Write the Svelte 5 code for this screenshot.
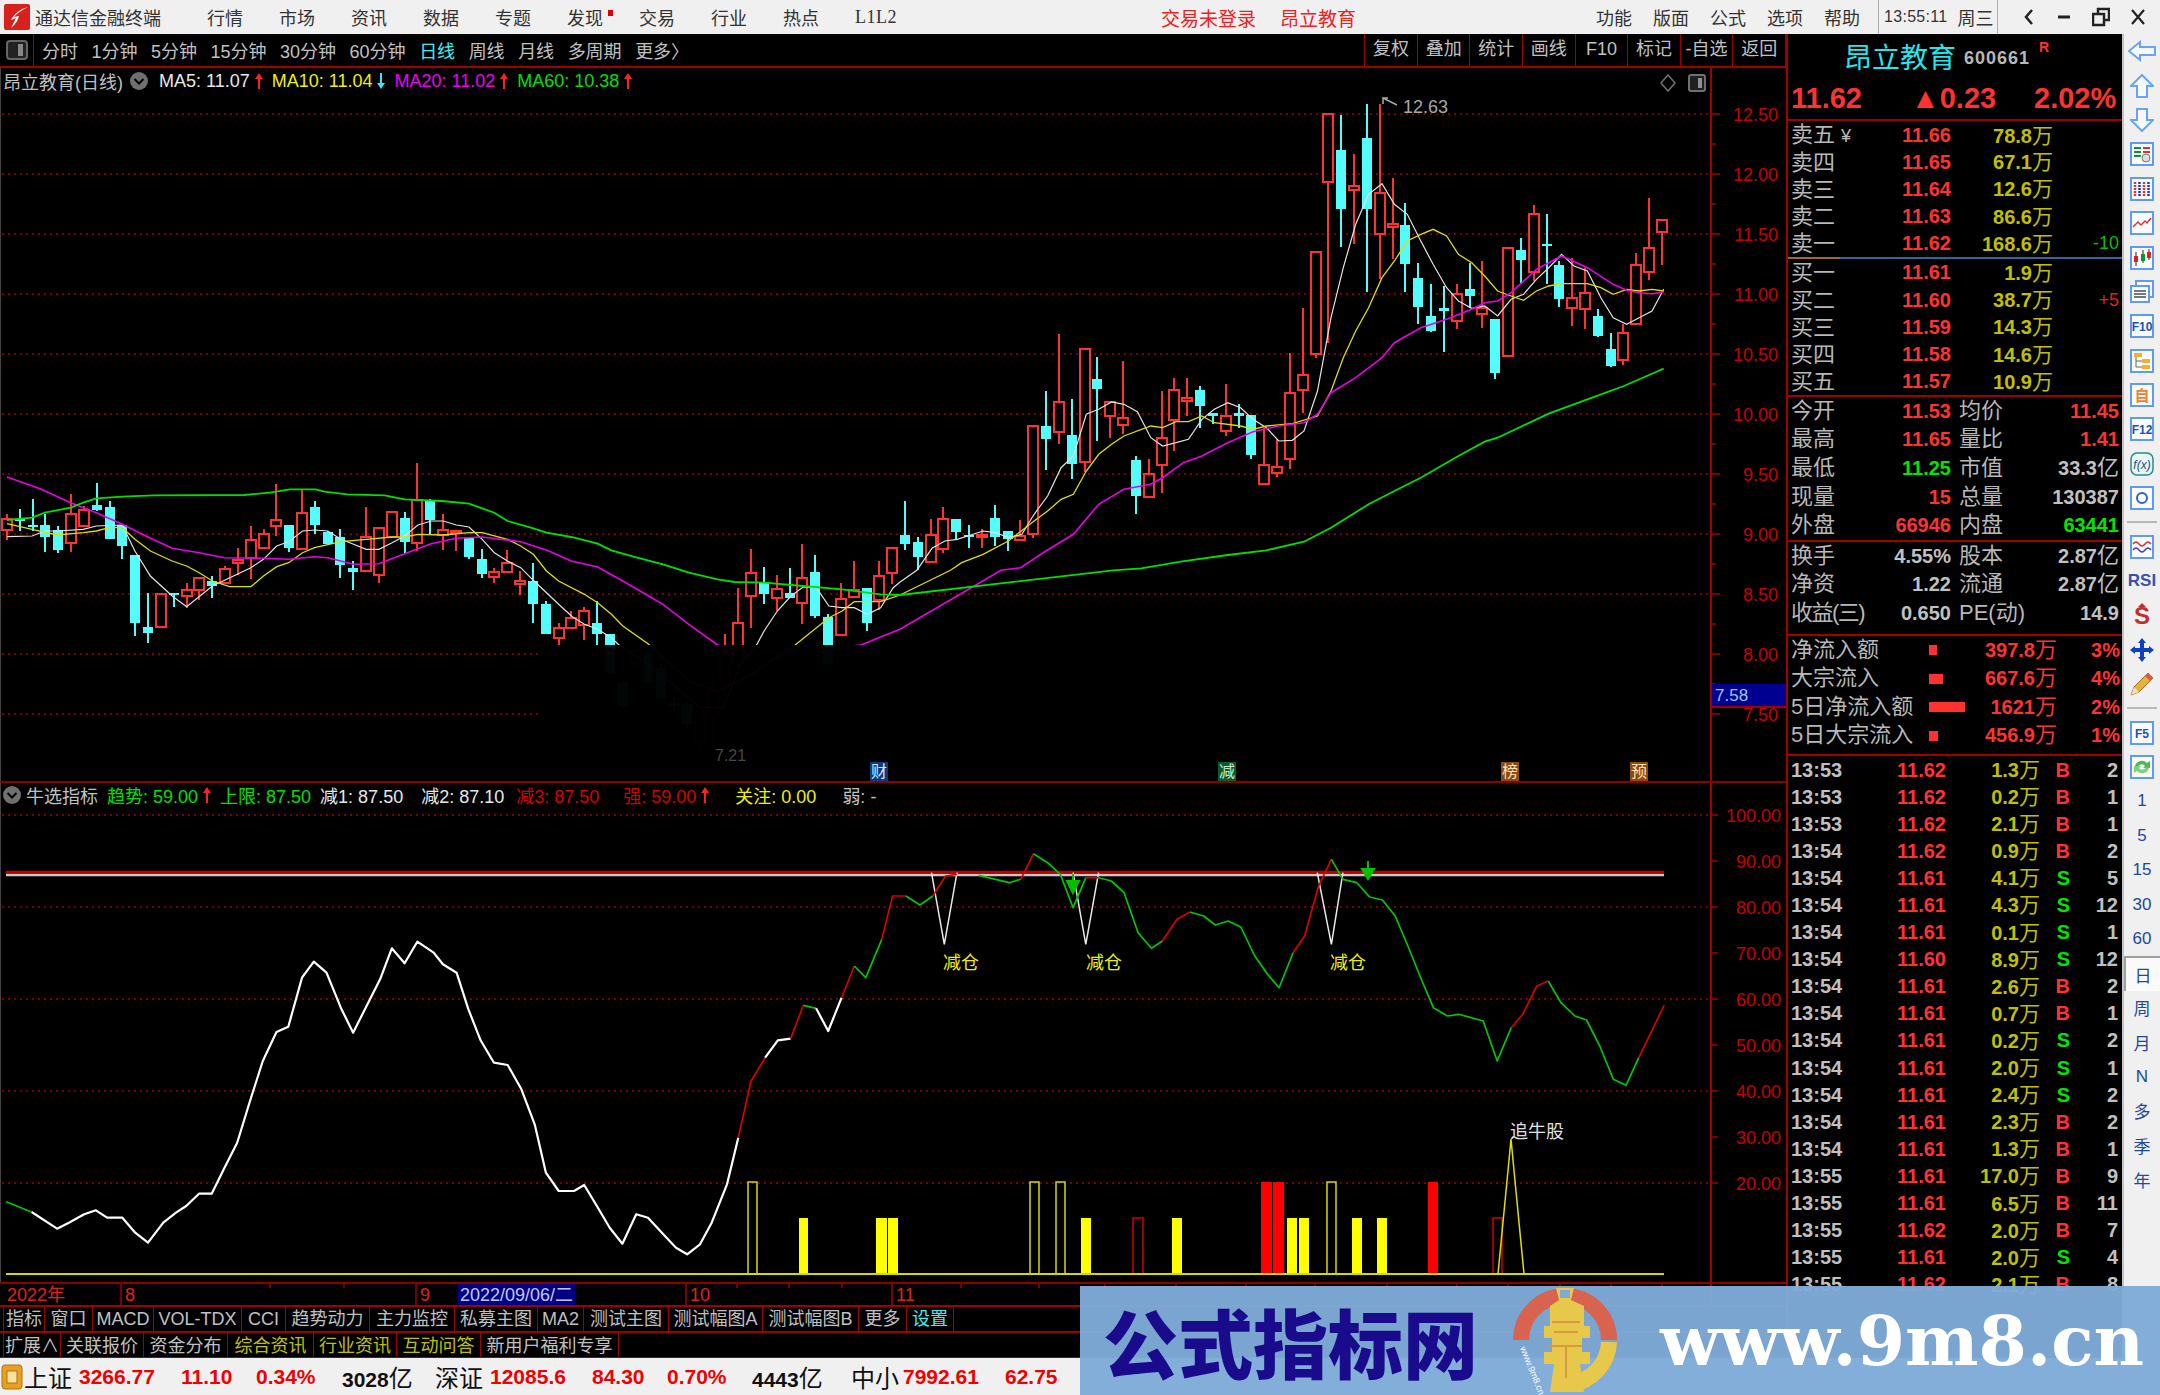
<script>
  // helpers: chart data was read off at a fixed scale, map it back to page pixels
  const x8 = (v) => v / 1.742;
  const y8 = (v) => 450 + v / 3;
  const x9 = (v) => 900 + v / 1.782;
  const y9 = (v) => 90 + v / 3;
  const x10 = (v) => 700 + v / 1.568;
  const x11 = (v) => v / 1.96;
  const y10 = (v) => 830 + v / 3;

  const pts = (s, fx, fy) =>
    s.trim().split(/\s+/).map((p) => {
      const [a, b] = p.split(',').map(Number);
      return `${fx(a).toFixed(1)},${fy(b).toFixed(1)}`;
    }).join(' ');

  // [red?, bodyTop, bodyBottom, high, low]
  const raw8 = [
    [1,205,237,190,268],[0,203,207,175,240],[0,222,225,145,240],[0,222,257,190,302],[0,237,297,225,307],
    [1,190,275,130,302],[1,178,225,165,225],[0,162,177,95,180],[0,167,265,150,265],[0,222,285,222,325],
    [0,312,515,312,555],[0,527,545,425,577],[1,430,527,430,527],[0,425,428,425,468],[1,417,435,395,470],
    [1,380,418,380,448],[0,390,405,375,440],[1,353,395,345,395],[1,327,337,290,372],[1,267,320,225,385],
    [1,250,292,235,292],[1,208,225,100,255],[0,222,292,222,302],[1,187,295,115,297],[0,168,222,150,250],
    [0,242,280,240,280],[0,258,342,235,382],[0,352,363,330,418],[1,258,360,168,360],[1,232,372,232,395],
    [1,182,257,182,260],[0,200,272,182,305],[1,148,275,37,300],[0,150,208,145,250],[1,237,252,190,297],
    [1,240,243,240,300],[0,262,317,262,325],[0,325,370,293,380],[1,362,377,350,395],[1,335,363,298,365],
    [1,390,400,360,432],[0,390,458,335,515],[0,460,550,450,550],[1,530,562,515,582],[1,502,530,480,530],
    [1,480,522,468,568],[0,515,550,450,582],[0,550,665,550,670],[0,695,765,690,770],[1,600,640,585,650],
    [0,610,690,600,700],[0,650,745,640,750],[0,755,765,740,780],[0,760,820,750,830],[1,780,870,770,895],
    [1,720,800,680,895],[1,600,700,550,740],[1,515,640,410,650],[1,367,435,293,530],[0,393,428,347,460],
    [1,415,440,372,480],[0,425,442,352,442],[1,380,455,280,520],[0,362,495,312,500],[0,497,640,490,650],
    [1,443,553,395,553],[1,418,437,330,437],[0,410,517,410,540],[1,375,448,330,478],[1,290,365,290,400]
  ];
  const raw9 = [
    [0,1332,1358,1230,1378],[0,1352,1398,1338,1438],[1,1333,1412,1285,1415],[1,1285,1375,1248,1385],[0,1285,1322,1285,1345],
    [0,1331,1334,1303,1372],[1,1333,1338,1315,1370],[0,1280,1338,1243,1365],[0,1320,1345,1320,1380],[1,1335,1348,1288,1350],
    [1,1005,1330,1005,1340],[0,1005,1043,900,1138],[1,933,1023,730,1060],[0,1032,1120,923,1165],[1,775,1113,775,1143],
    [0,865,895,798,1050],[1,933,975,933,1040],[1,980,1002,810,1030],[0,1108,1215,1095,1268],[1,1150,1218,1105,1218],
    [1,1042,1123,900,1205],[1,898,988,860,1080],[1,920,930,860,975],[0,897,945,885,1010],[0,965,975,965,1000],
    [1,975,1020,878,1035],[0,965,975,940,1010],[0,973,1092,973,1103],[1,1123,1178,1010,1178],[1,1128,1145,1045,1157],
    [1,907,1105,785,1135],[1,852,898,650,965],[1,483,790,483,800],[1,70,272,70,755],[0,177,355,72,468],
    [1,285,296,190,460],[0,140,355,40,603],[1,305,430,40,565],[1,398,408,262,505],[0,402,520,335,603],
    [0,560,648,515,700],[0,676,720,578,722],[0,650,660,585,783],[1,610,690,580,715],[0,595,615,515,652],
    [1,650,668,510,710],[0,685,845,685,863],[1,470,795,470,795],[0,478,507,440,580],[1,370,542,343,570],
    [0,460,463,370,578],[0,523,625,510,648],[1,620,650,500,705],[1,605,655,530,715],[0,676,735,655,738],
    [0,775,825,725,828],[1,727,808,700,823],[1,523,700,487,700],[1,470,542,320,568],[1,388,422,388,522]
  ];
  const toPage = (f) => (k) => [k[0], f(k[1]), f(k[2]), f(k[3]), f(k[4])];
  const candles = [...raw8.map(toPage(y8)), ...raw9.map(toPage(y9))];

  const ma = [
    { cls: 'ma5', d: pts('12,257 56,255 78,240 100,240 145,235 168,225 213,222 235,300 262,375 300,435 325,467 370,405 437,350 459,325 482,285 503,272 527,240 548,237 571,240 594,265 616,280 638,295 660,295 683,275 705,255 728,222 751,210 772,210 795,222 817,228 840,265 861,305 884,330 907,350 929,388 952,425 973,460 997,497 1018,520 1041,535 1065,560 1080,585 1130,640 1220,770 1260,770 1290,640 1318,582 1331,540 1354,480 1378,435 1399,408 1422,410 1444,465 1467,470 1488,470 1511,490 1534,470 1556,410 1568,393', x8, y8) + ' ' + pts('30,1438 57,1372 80,1350 102,1345 126,1332 148,1320 171,1325 193,1340 217,1330 239,1270 263,1215 287,1130 309,1095 332,970 354,955 377,933 399,940 423,962 447,1040 468,1065 492,1055 514,1045 538,985 560,955 584,935 607,950 629,985 653,1010 675,1050 699,1048 720,1020 744,900 768,680 790,530 812,400 835,310 859,278 881,340 904,370 928,450 950,520 974,590 995,630 1019,652 1042,645 1065,675 1089,625 1111,610 1134,565 1156,530 1179,490 1201,525 1225,540 1249,620 1271,680 1295,700 1317,680 1340,660 1361,595', x9, y9) },
    { cls: 'ma10', d: pts('12,218 56,235 100,252 145,245 168,240 190,230 213,230 235,265 262,300 300,330 325,345 347,365 370,390 400,407 437,407 459,375 482,347 503,335 527,305 548,290 594,272 638,265 683,258 705,258 728,250 772,252 817,245 840,245 884,265 907,285 929,310 952,360 973,390 1018,430 1041,455 1065,490 1085,525 1130,580 1200,690 1250,720 1300,680 1385,582 1444,500 1467,480 1488,452 1534,452 1568,432', x8, y8) + ' ' + pts('90,1438 110,1415 148,1390 193,1350 239,1290 263,1260 287,1225 309,1210 332,1140 354,1090 377,1060 399,1035 447,1005 468,1010 492,992 514,992 538,975 560,995 607,1005 629,1015 653,1005 699,998 744,975 768,900 790,800 812,720 835,650 859,560 881,510 904,450 928,430 950,415 974,435 995,490 1019,515 1042,555 1065,600 1089,615 1111,628 1134,600 1156,585 1179,578 1225,578 1249,590 1271,610 1295,595 1317,600 1340,595 1361,600', x9, y9) },
    { cls: 'ma20', d: pts('12,78 70,113 123,155 168,185 213,220 262,262 300,292 347,305 391,320 459,322 503,325 548,317 571,320 616,340 660,338 705,308 751,278 795,262 840,258 907,272 952,297 995,330 1041,348 1085,390 1130,435 1155,460 1200,520 1250,582 1290,605 1400,600 1500,582 1534,558 1568,535', x8, y8) + ' ' + pts('180,1438 215,1430 260,1380 309,1330 354,1240 399,1195 447,1180 468,1160 505,1115 538,1095 584,1055 629,1022 675,1005 720,995 744,970 768,905 812,860 859,800 881,755 928,710 974,685 1019,655 1042,635 1065,630 1089,605 1134,535 1179,495 1225,530 1271,580 1295,598 1317,605 1340,608 1361,603', x9, y9) },
    { cls: 'ma60', d: pts('12,207 56,200 78,185 123,170 145,155 168,142 213,137 268,133 425,132 470,125 505,115 550,115 565,122 605,130 670,133 705,145 770,150 817,158 861,185 884,210 929,232 952,245 995,258 1041,278 1065,298 1110,320 1155,340 1200,365 1250,385 1280,393 1331,395 1399,405 1467,415 1534,430 1568,432', x8, y8) + ' ' + pts('380,1438 430,1432 500,1412 584,1392 653,1378 720,1352 768,1310 835,1240 881,1200 928,1160 995,1095 1042,1052 1065,1040 1156,968 1225,925 1290,885 1340,848 1361,833', x9, y9) }
  ];

  const priceY = (p) => 113 + (12.5 - p) * 120;
  const gridPrices = [12.5, 12, 11.5, 11, 10.5, 10, 9.5, 9, 8.5];
  const axisPrices = [12.5, 12, 11.5, 11, 10.5, 10, 9.5, 9, 8.5, 8, 7.5];
  const quarterTicks = [12.25, 11.75, 11.25, 10.75, 10.25, 9.75, 9.25, 8.75, 8.25, 7.75];

  const valY = (v) => 1274 - v * 4.6;
  const indLabels = [100, 90, 80, 70, 60, 50, 40, 30, 20];
  const indGrid = [100, 80, 60, 40, 20];

  // trend line of the indicator, split up by colour
  const segs = [
    ['g', pts('12,1112 62,1143', x11, y10)],
    ['w', pts('62,1143 112,1193 135,1175 165,1150 188,1138 210,1160 240,1160 265,1205 290,1235 320,1175 345,1145 365,1125 390,1088 415,1088 440,1010 465,935 490,810 515,690 542,603 565,587 592,440 615,392 640,425 668,530 692,605 745,445 768,352 793,397 818,332 850,365 868,400 895,425 918,535 942,628 968,695 995,702 1022,775 1048,880 1070,1025 1095,1080 1125,1080 1145,1062 1170,1125 1195,1190 1220,1238 1247,1150 1270,1160 1300,1210 1325,1250 1347,1270 1372,1240 1395,1175 1425,1060 1447,920', x11, y10)],
    ['r', pts('60,920 80,750 102,680', x10, y10)],
    ['w', pts('102,680 122,628 142,623', x10, y10)],
    ['r', pts('142,623 162,523', x10, y10)],
    ['g', pts('162,523 182,532', x10, y10)],
    ['w', pts('182,532 201,600 222,500', x10, y10)],
    ['r', pts('222,500 242,405', x10, y10)],
    ['g', pts('242,405 260,440 285,325', x10, y10)],
    ['r', pts('285,325 302,195 323,195', x10, y10)],
    ['g', pts('323,195 345,222 365,195', x10, y10)],
    ['r', pts('365,195 385,135 403,130', x10, y10)],
    ['g', pts('437,133 485,155 503,145', x10, y10)],
    ['r', pts('503,145 523,68', x10, y10)],
    ['g', pts('523,68 545,95 565,130 585,230 605,140', x10, y10)],
    ['r', pts('605,140 625,140', x10, y10)],
    ['g', pts('625,140 645,150 665,185 687,305 708,352 725,330', x10, y10)],
    ['r', pts('725,330 748,265 768,243', x10, y10)],
    ['g', pts('768,243 790,255 808,282 828,270 848,288 870,375 890,430 908,470 930,365', x10, y10)],
    ['r', pts('930,365 948,315 970,165 990,85', x10, y10)],
    ['g', pts('990,85 1008,145 1030,155 1050,198 1070,207 1090,255 1110,345 1130,440 1150,530 1172,555 1190,550 1228,570 1250,690 1272,590', x10, y10)],
    ['r', pts('1272,590 1290,550 1312,465 1330,450', x10, y10)],
    ['g', pts('1330,450 1350,515 1372,555 1390,567 1412,650 1432,745 1452,763 1472,680', x10, y10)],
    ['r', pts('1472,680 1512,522', x10, y10)]
  ];
  const dips = [
    pts('363,125 383,340 403,125', x10, y10),
    pts('585,125 605,340 625,125', x10, y10),
    pts('968,125 990,340 1008,125', x10, y10)
  ];

  // [left, right, tall?, kind] kind: y yellow solid, h hollow yellow, r red solid, o hollow red
  const bars = [
    [748, 757, 1, 'h'], [799, 808, 0, 'y'], [876, 887, 0, 'y'], [888, 898, 0, 'y'],
    [1030, 1039, 1, 'h'], [1056, 1065, 1, 'h'], [1081, 1091, 0, 'y'], [1133, 1143, 0, 'o'],
    [1172, 1182, 0, 'y'], [1261, 1272, 1, 'r'], [1273, 1284, 1, 'r'], [1287, 1297, 0, 'y'],
    [1299, 1309, 0, 'y'], [1327, 1336, 1, 'h'], [1352, 1362, 0, 'y'], [1377, 1387, 0, 'y'],
    [1428, 1438, 1, 'r'], [1493, 1502, 0, 'o']
  ];

  const menu = ['行情', '市场', '资讯', '数据', '专题', '发现', '交易', '行业', '热点'];
  const periods = ['分时', '1分钟', '5分钟', '15分钟', '30分钟', '60分钟', '日线', '周线', '月线', '多周期', '更多〉'];
  const chartBtns = ['复权', '叠加', '统计', '画线', 'F10', '标记', '-自选', '返回'];

  const asks = [
    ['卖五', '11.66', '78.8', '', ''], ['卖四', '11.65', '67.1', '', ''], ['卖三', '11.64', '12.6', '', ''],
    ['卖二', '11.63', '86.6', '', ''], ['卖一', '11.62', '168.6', '-10', 'green']
  ];
  const bids = [
    ['买一', '11.61', '1.9', '', ''], ['买二', '11.60', '38.7', '+5', 'red'], ['买三', '11.59', '14.3', '', ''],
    ['买四', '11.58', '14.6', '', ''], ['买五', '11.57', '10.9', '', '']
  ];
  const quotes = [
    ['今开', '11.53', 'red', '均价', '11.45', 'red'],
    ['最高', '11.65', 'red', '量比', '1.41', 'red'],
    ['最低', '11.25', 'green', '市值', '33.3亿', 'gray'],
    ['现量', '15', 'red', '总量', '130387', 'gray'],
    ['外盘', '66946', 'red', '内盘', '63441', 'green']
  ];
  const quotes2 = [
    ['换手', '4.55%', 'gray', '股本', '2.87亿', 'gray'],
    ['净资', '1.22', 'gray', '流通', '2.87亿', 'gray'],
    ['收益(三)', '0.650', 'gray', 'PE(动)', '14.9', 'gray']
  ];
  const flows = [
    ['净流入额', 8, '397.8万', '3%'],
    ['大宗流入', 14, '667.6万', '4%'],
    ['5日净流入额', 36, '1621万', '2%'],
    ['5日大宗流入', 9, '456.9万', '1%']
  ];
  const trades = [
    ['13:53', '11.62', '1.3', 'B', 2], ['13:53', '11.62', '0.2', 'B', 1], ['13:53', '11.62', '2.1', 'B', 1],
    ['13:54', '11.62', '0.9', 'B', 2], ['13:54', '11.61', '4.1', 'S', 5], ['13:54', '11.61', '4.3', 'S', 12],
    ['13:54', '11.61', '0.1', 'S', 1], ['13:54', '11.60', '8.9', 'S', 12], ['13:54', '11.61', '2.6', 'B', 2],
    ['13:54', '11.61', '0.7', 'B', 1], ['13:54', '11.61', '0.2', 'S', 2], ['13:54', '11.61', '2.0', 'S', 1],
    ['13:54', '11.61', '2.4', 'S', 2], ['13:54', '11.61', '2.3', 'B', 2], ['13:54', '11.61', '1.3', 'B', 1],
    ['13:55', '11.61', '17.0', 'B', 9], ['13:55', '11.61', '6.5', 'B', 11], ['13:55', '11.62', '2.0', 'B', 7],
    ['13:55', '11.61', '2.0', 'S', 4], ['13:55', '11.62', '2.1', 'B', 8]
  ];

  const tabs1 = [['指标'], ['窗口'], ['MACD'], ['VOL-TDX'], ['CCI'], ['趋势动力'], ['主力监控'], ['私募主图'], ['MA2'], ['测试主图'], ['测试幅图A'], ['测试幅图B'], ['更多'], ['设置', 'cyan']];
  const tabs2 = [['扩展∧'], ['关联报价'], ['资金分布'], ['综合资讯', 'olive'], ['行业资讯', 'olive'], ['互动问答', 'olive'], ['新用户福利专享']];
  const dateTicks = [270, 344, 737, 789, 842, 961, 1039, 1105, 1176, 1246, 1315, 1387, 1457, 1508, 1560, 1611, 1662];
  const periodsSide = ['1', '5', '15', '30', '60'];
  const periodsSide2 = ['周', '月', 'N', '多', '季', '年'];
</script>

{#snippet arrowUp()}
  <svg class="arr" width="8" height="16" viewBox="0 0 8 16"><path d="M4 0 L8 6 H5 V16 H3 V6 H0 Z" fill="#ff2020" /></svg>
{/snippet}
{#snippet arrowDown()}
  <svg class="arr" width="8" height="16" viewBox="0 0 8 16"><path d="M4 16 L8 10 H5 V0 H3 V10 H0 Z" fill="#40e0ff" /></svg>
{/snippet}
{#snippet chevron()}
  <svg width="18" height="18" viewBox="0 0 18 18"><circle cx="9" cy="9" r="9" fill="#707070" /><path d="M4.5 7 L9 11.5 L13.5 7" fill="none" stroke="#000" stroke-width="2" /></svg>
{/snippet}

<div class="app">
  <header class="top">
    <div class="top-left">
      <svg class="logo" width="26" height="26" viewBox="0 0 26 26">
        <rect width="26" height="26" rx="2" fill="#d8201c" />
        <path d="M24 3 C16 5 10 10 7 16 L12 14 L7 24 C12 20 14 16 15 12 L10 13 C13 9 18 6 24 3 Z" fill="#fff" />
      </svg>
      <span class="brand">通达信金融终端</span>
      <nav class="menu">
        {#each menu as m}
          <span class="menu-item">{m}{#if m === '发现'}<i class="dot"></i>{/if}</span>
        {/each}
        <span class="menu-item l2">L1L2</span>
      </nav>
    </div>
    <div class="top-center"><span>交易未登录</span><span>昂立教育</span></div>
    <div class="top-right">
      <span>功能</span><span>版面</span><span>公式</span><span>选项</span><span>帮助</span>
      <div class="clock"><span class="time">13:55:11</span><span>周三</span></div>
      <div class="win">
        <svg width="14" height="20" viewBox="0 0 14 20"><path d="M10 3 L4 10 L10 17" fill="none" stroke="#222" stroke-width="2.5" /></svg>
        <svg width="14" height="20" viewBox="0 0 14 20"><path d="M1 10 H13" stroke="#222" stroke-width="3" /></svg>
        <svg width="18" height="20" viewBox="0 0 18 20"><path d="M1 7 H12 V18 H1 Z M6 7 V2 H17 V13 H12" fill="none" stroke="#222" stroke-width="2.5" /></svg>
        <svg width="14" height="20" viewBox="0 0 14 20"><path d="M1 3 L13 17 M13 3 L1 17" stroke="#222" stroke-width="2.2" /></svg>
      </div>
    </div>
  </header>

  <div class="middle">
    <section class="left">
      <div class="toolbar">
        <div class="tb-icon"><svg width="22" height="20" viewBox="0 0 22 20"><rect x="1" y="1" width="20" height="18" rx="3" fill="#222" stroke="#666" stroke-width="2" /><rect x="12" y="4" width="5" height="12" fill="#888" /></svg></div>
        <div class="periods">
          {#each periods as p}
            <span class:active={p === '日线'}>{p}</span>
          {/each}
        </div>
        <div class="btns">
          {#each chartBtns as b}
            <span>{b}</span>
          {/each}
        </div>
      </div>

      <div class="chart main-chart">
        <svg width="1786" height="713" viewBox="0 67 1786 713">
          <line class="edge" x1="0.5" x2="0.5" y1="67" y2="780" />
          {#each gridPrices as p}
            <line class="dots" x1="2" x2="1711" y1={priceY(p)} y2={priceY(p)} />
          {/each}
          <line class="dots" x1="2" x2="540" y1={priceY(8)} y2={priceY(8)} />
          <line class="dots" x1="2" x2="540" y1={priceY(7.5)} y2={priceY(7.5)} />

          {#each candles as k, i}
            {@const cx = Math.round(6.9 + 12.83 * i)}
            <line class={k[0] ? 'wick-r' : 'wick-c'} x1={cx} x2={cx} y1={k[3]} y2={k[4]} />
            <rect class={k[0] ? 'body-r' : 'body-c'} x={cx - 5} width="10" y={k[1]} height={Math.max(k[2] - k[1], 2)} />
          {/each}
          {#each ma as l}
            <polyline class={l.cls} points={l.d} />
          {/each}

          <!-- the bottom of the chart is blanked out in the screenshot -->
          <rect class="blank" x="540" y="644" width="1171" height="110" />
          <text class="faint" x="715" y="760">7.21</text>
          <path d="M1383 103 V97 L1397 104 M1383 97 L1388 97" fill="none" stroke="#a8a8a8" stroke-width="1.5" />
          <text class="high" x="1403" y="112">12.63</text>

          <rect x="870" y="761" width="18" height="19" fill="#0a3a80" />
          <text class="mark" x="879" y="776" fill="#d8e8ff">财</text>
          <rect x="1218" y="761" width="18" height="19" fill="#0c5a30" />
          <text class="mark" x="1227" y="776" fill="#c8f0c8">减</text>
          <rect x="1501" y="761" width="18" height="19" fill="#8a4a14" />
          <text class="mark" x="1510" y="776" fill="#ffe0b0">榜</text>
          <rect x="1630" y="761" width="18" height="19" fill="#8a4a14" />
          <text class="mark" x="1639" y="776" fill="#ffe0b0">预</text>

          <line class="axis" x1="1711" x2="1711" y1="67" y2="780" />
          {#each quarterTicks as p}
            <line class="axis-thin" x1="1711" x2="1716" y1={priceY(p)} y2={priceY(p)} />
          {/each}
          {#each axisPrices as p}
            <line class="axis-thin" x1="1711" x2="1720" y1={priceY(p)} y2={priceY(p)} />
            <text class="ax" x="1778" y={priceY(p) + 7}>{p.toFixed(2)}</text>
          {/each}
          <rect x="1712" y="683" width="74" height="22" fill="#000090" />
          <text class="cur" x="1715" y="700">7.58</text>
          <line class="axis" x1="1711" x2="1786" y1="706" y2="706" />

          <path d="M1668 74 L1675 82 L1668 90 L1661 82 Z" fill="none" stroke="#707070" stroke-width="1.5" />
          <rect x="1689" y="74" width="16" height="16" rx="2" fill="#202020" stroke="#707070" stroke-width="2" />
          <rect x="1698" y="77" width="4" height="10" fill="#909090" />
        </svg>
        <div class="legend">
          <span class="gray">昂立教育(日线)</span>
          <span class="chev">{@render chevron()}</span>
          <span class="white first-lg">MA5: 11.07</span>{@render arrowUp()}
          <span class="yellow lg">MA10: 11.04</span>{@render arrowDown()}
          <span class="magenta lg">MA20: 11.02</span>{@render arrowUp()}
          <span class="lime lg">MA60: 10.38</span>{@render arrowUp()}
        </div>
      </div>

      <div class="chart ind-chart">
        <svg width="1786" height="499" viewBox="0 782 1786 499">
          <line class="edge" x1="0.5" x2="0.5" y1="782" y2="1281" />
          {#each indGrid as v}
            <line class="dots" x1="2" x2="1711" y1={valY(v)} y2={valY(v)} />
          {/each}
          <line class="limit-red" x1="6" x2="1664" y1="871" y2="871" />
          <line class="limit-gray" x1="6" x2="1664" y1="874" y2="874" />

          {#each bars as b}
            {@const top = b[2] ? 1181 : 1217}
            {#if b[3] === 'y' || b[3] === 'r'}
              <rect x={b[0]} y={top} width={b[1] - b[0]} height={1273 - top} fill={b[3] === 'y' ? '#ffff00' : '#ff0000'} />
            {:else}
              <rect x={b[0]} y={top} width={b[1] - b[0]} height={1273 - top} fill="none" stroke={b[3] === 'h' ? '#d8d800' : '#d00000'} stroke-width="1.5" />
            {/if}
          {/each}
          <line class="base" x1="6" x2="1664" y1="1273" y2="1273" />
          <polyline class="spike" points="1498,1273 1507,1180 1511,1138 1515,1180 1524,1273" />
          <text class="chase" x="1510" y="1137">追牛股</text>

          {#each dips as d}
            <polyline class="dip" points={d} />
          {/each}
          {#each segs as s}
            <polyline class={'seg-' + s[0]} points={s[1]} />
          {/each}
          <path d="M1073 873 V884 M1067 880 H1079 L1073 892 Z" fill="#00c000" stroke="#00c000" stroke-width="2" />
          <path d="M1368 860 V870 M1362 868 H1374 L1368 878 Z" fill="#00c000" stroke="#00c000" stroke-width="2" />

          <text class="warn" x="943" y="968">减仓</text>
          <text class="warn" x="1086" y="968">减仓</text>
          <text class="warn" x="1330" y="968">减仓</text>

          <line class="axis" x1="1711" x2="1711" y1="782" y2="1281" />
          {#each indLabels as v}
            <line class="axis-thin" x1="1711" x2="1718" y1={valY(v)} y2={valY(v)} />
            <text class="ax" x="1781" y={valY(v) + 7}>{v.toFixed(2)}</text>
          {/each}
        </svg>
        <div class="legend ind">
          <span class="chev first">{@render chevron()}</span>
          <span class="gray">牛选指标</span>
          <span class="lime lg">趋势: 59.00</span>{@render arrowUp()}
          <span class="lime lg">上限: 87.50</span>
          <span class="white lg">减1: 87.50</span>
          <span class="white wide">减2: 87.10</span>
          <span class="dred narrow">减3: 87.50</span>
          <span class="dred wider">强: 59.00</span>{@render arrowUp()}
          <span class="yellow widest">关注: 0.00</span>
          <span class="gray widest">弱: -</span>
        </div>
      </div>

      <div class="dates">
        <svg width="1786" height="21" viewBox="0 0 1786 21">
          {#each dateTicks as t}
            <line class="axis-thin" x1={t} x2={t} y1="0" y2="4" />
          {/each}
          <line class="axis-thin" x1="121" x2="121" y1="0" y2="21" />
          <line class="axis-thin" x1="416" x2="416" y1="0" y2="21" />
          <line class="axis-thin" x1="686" x2="686" y1="0" y2="21" />
          <line class="axis-thin" x1="892" x2="892" y1="0" y2="21" />
          <text class="dt" x="7" y="17">2022年</text>
          <text class="dt" x="125" y="17">8</text>
          <text class="dt" x="420" y="17">9</text>
          <rect x="458" y="0" width="117" height="21" fill="#000080" />
          <text class="dt-sel" x="460" y="17">2022/09/06/二</text>
          <text class="dt" x="690" y="17">10</text>
          <text class="dt" x="896" y="17">11</text>
          <line class="axis" x1="1711" x2="1711" y1="0" y2="21" />
        </svg>
      </div>

      <div class="tabs row1">
        {#each tabs1 as t}
          <span class={t[1] || ''}>{t[0]}</span>
        {/each}
      </div>
      <div class="tabs row2">
        {#each tabs2 as t}
          <span class={t[1] || ''}>{t[0]}</span>
        {/each}
      </div>
    </section>

    <aside class="panel">
      <div class="name">
        <span class="cn">昂立教育</span><span class="code">600661</span><sup class="r">R</sup>
      </div>
      <div class="price"><span>11.62</span><span>▲0.23</span><span>2.02%</span></div>

      <div class="sec depth">
        {#each asks as a, i}
          <div class="d-row">
            <span class="lbl">{a[0]}{#if i === 0}<em class="yen">¥</em>{/if}</span>
            <b class="red">{a[1]}</b>
            <span class="vol"><b>{a[2]}</b>万</span>
            <span class="delta {a[4]}">{a[3]}</span>
          </div>
        {/each}
      </div>
      <div class="split"></div>
      <div class="depth">
        {#each bids as a}
          <div class="d-row">
            <span class="lbl">{a[0]}</span>
            <b class="red">{a[1]}</b>
            <span class="vol"><b>{a[2]}</b>万</span>
            <span class="delta {a[4]}">{a[3]}</span>
          </div>
        {/each}
      </div>

      <div class="sec">
        {#each quotes as q}
          <div class="q-row">
            <span class="lbl">{q[0]}</span><b class={q[2]}>{q[1]}</b>
            <span class="lbl l2nd">{q[3]}</span><b class={q[5]}>{q[4].replace('亿', '')}{#if q[4].endsWith('亿')}<i class="unit">亿</i>{/if}</b>
          </div>
        {/each}
      </div>
      <div class="sec pad">
        {#each quotes2 as q}
          <div class="q-row">
            <span class="lbl" class:tight={q[0].includes('(')}>{q[0]}</span><b class={q[2]}>{q[1]}</b>
            <span class="lbl l2nd">{q[3]}</span><b class={q[5]}>{q[4].replace('亿', '')}{#if q[4].endsWith('亿')}<i class="unit">亿</i>{/if}</b>
          </div>
        {/each}
      </div>
      <div class="sec pad2">
        {#each flows as f}
          <div class="f-row">
            <span class="lbl">{f[0]}</span>
            <span class="bar-cell"><i class="bar" style="width:{f[1]}px"></i></span>
            <b class="red">{f[2].replace('万', '')}<i class="unit">万</i></b>
            <b class="red">{f[3]}</b>
          </div>
        {/each}
      </div>
      <div class="sec">
        {#each trades as t}
          <div class="t-row">
            <b class="gray">{t[0]}</b>
            <b class="red">{t[1]}</b>
            <span class="vol"><b>{t[2]}</b>万</span>
            <b class={t[3] === 'B' ? 'red' : 'green'}>{t[3]}</b>
            <b class="gray">{t[4]}</b>
          </div>
        {/each}
      </div>
    </aside>

    <aside class="side">
      <span class="ic"><svg width="28" height="22" viewBox="0 0 28 22"><path d="M1 11 L12 2 V7 H27 V15 H12 V20 Z" class="ar" /></svg></span>
      <span class="ic"><svg width="24" height="24" viewBox="0 0 24 24"><path d="M12 1 L23 12 H17 V23 H7 V12 H1 Z" class="ar" /></svg></span>
      <span class="ic"><svg width="24" height="24" viewBox="0 0 24 24"><path d="M12 23 L23 12 H17 V1 H7 V12 H1 Z" class="ar" /></svg></span>
      <span class="ic"><svg width="24" height="24" viewBox="0 0 24 24"><rect class="bx" x="1" y="1" width="22" height="22" /><path d="M4 6 H11 M4 10 H11 M4 14 H11" stroke="#109030" stroke-width="2" /><path d="M13 6 H20 M13 10 H20" stroke="#e03030" stroke-width="2" /><circle cx="16" cy="16" r="4" fill="#ddd" stroke="#777" /></svg></span>
      <span class="ic"><svg width="24" height="24" viewBox="0 0 24 24"><rect class="bx" x="1" y="1" width="22" height="22" /><path d="M5 5 V19" stroke="#e03030" stroke-width="2.5" stroke-dasharray="2 1" /><path d="M9.5 5 V19" stroke="#2030d0" stroke-width="2.5" stroke-dasharray="2 1" /><path d="M14 5 V19" stroke="#e03030" stroke-width="2.5" stroke-dasharray="2 1" /><path d="M18.5 5 V19" stroke="#2030d0" stroke-width="2.5" stroke-dasharray="2 1" /></svg></span>
      <span class="ic"><svg width="24" height="24" viewBox="0 0 24 24"><rect class="bx" x="1" y="1" width="22" height="22" /><path d="M3 16 L8 11 L11 14 L15 10 L17 12 L21 7" fill="none" stroke="#e03030" stroke-width="1.5" /></svg></span>
      <span class="ic"><svg width="24" height="24" viewBox="0 0 24 24"><rect class="bx" x="1" y="1" width="22" height="22" /><path d="M6 6 V20 M13 4 V17 M19 3 V14" stroke="#222" /><rect x="4" y="10" width="4" height="6" fill="#e02020" /><rect x="11" y="8" width="4" height="7" fill="#109030" /><rect x="17" y="6" width="4" height="6" fill="#e02020" /></svg></span>
      <span class="ic"><svg width="24" height="24" viewBox="0 0 24 24"><rect class="bx" x="6" y="1" width="17" height="16" /><rect class="bx" x="1" y="6" width="18" height="16" /><path d="M4 11 H16 M4 14 H16 M4 17 H16" stroke="#777" stroke-width="2" /></svg></span>
      <span class="ic"><svg width="24" height="24" viewBox="0 0 24 24"><rect class="bx" x="1" y="1" width="22" height="22" /><text class="ic-t" x="12" y="16.5">F10</text></svg></span>
      <span class="ic"><svg width="24" height="24" viewBox="0 0 24 24"><rect class="bx" x="1" y="1" width="22" height="22" /><rect x="4" y="4" width="8" height="4" fill="#f0b030" /><rect x="12" y="10" width="8" height="4" fill="#f0b030" /><rect x="12" y="16" width="8" height="4" fill="#f0b030" /><path d="M6 8 V18 H12 M6 12 H12" fill="none" stroke="#666" /></svg></span>
      <span class="ic"><svg width="24" height="24" viewBox="0 0 24 24"><rect class="bx" x="1" y="1" width="22" height="22" /><text class="ic-o" x="12" y="18">自</text></svg></span>
      <span class="ic"><svg width="24" height="24" viewBox="0 0 24 24"><rect class="bx" x="1" y="1" width="22" height="22" /><text class="ic-t" x="12" y="16.5">F12</text></svg></span>
      <span class="ic"><svg width="24" height="24" viewBox="0 0 24 24"><rect x="1" y="1" width="22" height="22" rx="6" fill="#e8f8f4" stroke="#2a8a8a" stroke-width="1.5" /><text class="ic-f" x="12" y="17">f(x)</text></svg></span>
      <span class="ic"><svg width="24" height="24" viewBox="0 0 24 24"><rect class="bx" x="1" y="1" width="22" height="22" /><circle cx="12" cy="12" r="5" fill="none" stroke="#3060c0" stroke-width="2" /></svg></span>
      <hr />
      <span class="ic"><svg width="24" height="24" viewBox="0 0 24 24"><rect class="bx" x="1" y="1" width="22" height="22" /><path d="M3 9 Q6 5 9 9 T15 9 T21 9" fill="none" stroke="#e03030" stroke-width="1.5" /><path d="M3 15 Q6 11 9 15 T15 15 T21 15" fill="none" stroke="#4040d0" stroke-width="1.5" /></svg></span>
      <span class="ic rsi">RSI</span>
      <span class="ic"><svg width="24" height="26" viewBox="0 0 24 26"><text class="ic-s" x="12" y="22">S</text><path d="M12 1 L16 5 H8 Z" fill="#c03030" /></svg></span>
      <span class="ic"><svg width="26" height="26" viewBox="0 0 26 26"><path d="M13 1 L17 6 H15 V11 H20 V9 L25 13 L20 17 V15 H15 V20 H17 L13 25 L9 20 H11 V15 H6 V17 L1 13 L6 9 V11 H11 V6 H9 Z" fill="#1040c0" /></svg></span>
      <span class="ic"><svg width="26" height="26" viewBox="0 0 26 26"><path d="M2 24 L5 16 L19 2 L24 7 L10 21 Z" fill="#e8b040" stroke="#a07020" /><path d="M2 24 L5 16 L10 21 Z" fill="#f0e0c0" /><path d="M19 2 L24 7 L21 10 L16 5 Z" fill="#d86040" /></svg></span>
      <hr />
      <span class="ic"><svg width="24" height="24" viewBox="0 0 24 24"><rect class="bx" x="1" y="1" width="22" height="22" /><text class="ic-t" x="12" y="16.5">F5</text></svg></span>
      <span class="ic"><svg width="24" height="24" viewBox="0 0 24 24"><rect class="bx" x="1" y="1" width="22" height="22" /><path d="M5 11 A7 7 0 0 1 17 8 L20 6 V13 H13 L15 11 A4 4 0 0 0 8 12 Z" fill="#50b850" /><path d="M19 13 A7 7 0 0 1 7 16 L4 18 V11 H11 L9 13 A4 4 0 0 0 16 12 Z" fill="#80d080" /></svg></span>
      {#each periodsSide as p}
        <span class="ic txt">{p}</span>
      {/each}
      <span class="ic txt sel">日</span>
      {#each periodsSide2 as p}
        <span class="ic txt">{p}</span>
      {/each}
    </aside>
  </div>

  <footer class="status">
    <svg width="22" height="26" viewBox="0 0 22 26"><rect x="1" y="1" width="20" height="24" rx="3" fill="#e8a020" stroke="#b07010" /><rect x="6" y="7" width="10" height="12" fill="#f8e0a0" stroke="#b07010" /></svg>
    <span class="s-lbl">上证</span><b class="s-red">3266.77</b><b class="s-red">11.10</b><b class="s-red">0.34%</b><span class="s-vol"><b>3028</b>亿</span>
    <span class="s-lbl">深证</span><b class="s-red">12085.6</b><b class="s-red">84.30</b><b class="s-red">0.70%</b><span class="s-vol"><b>4443</b>亿</span>
    <span class="s-lbl">中小</span><b class="s-red">7992.61</b><b class="s-red">62.75</b>
  </footer>

  <!-- site stamp lying over the bottom right corner -->
  <div class="stamp">
    <span class="stamp-cn">公式指标网</span>
    <svg class="stamp-logo" width="110" height="109" viewBox="0 0 110 109">
      <path d="M11 54 A44 44 0 0 1 99 54" fill="none" stroke="#d8634f" stroke-width="16" />
      <path d="M99 56 A44 44 0 0 1 60 98" fill="none" stroke="#e8c84a" stroke-width="16" />
      <path d="M46 2 H64 L61 14 L74 20 V40 H80 V52 H72 V66 H80 V78 H70 L74 106 H40 L44 78 H34 V66 H42 V52 H34 V40 H40 V20 L49 14 Z" fill="#e8c84a" />
      <path d="M42 36 H70 M40 60 H72 M56 60 V92 M44 46 H68" stroke="#d89a40" stroke-width="2" />
      <path d="M50 4 H60 V12 H50 Z" fill="#80abd9" />
      <text class="stamp-mini" transform="translate(10 62) rotate(68)">www.9m8.cn</text>
    </svg>
    <span class="stamp-en">www.9m8.cn</span>
  </div>
</div>

<style>
  :global(body) {
    margin: 0;
    background: #000;
  }

  .app {
    position: relative;
    width: 2160px;
    height: 1395px;
    display: flex;
    flex-direction: column;
    overflow: hidden;
    background: #000;
    color: #c0c0c0;
    font-family: "Liberation Sans", "Noto Sans CJK SC", sans-serif;
    font-size: 18px;
  }

  .top {
    height: 34px;
    flex: none;
    background: #f0f0f0;
    color: #333;
    display: grid;
    grid-template-columns: 1161px 435px 1fr;
    align-items: center;
    white-space: nowrap;
  }

  .top-left,
  .top-center,
  .top-right,
  .menu,
  .clock,
  .win {
    display: flex;
    align-items: center;
  }

  .logo {
    margin-left: 4px;
  }

  .brand {
    margin-left: 5px;
  }

  .menu {
    margin-left: 46px;
    gap: 36px;
  }

  .menu-item {
    position: relative;
  }

  .dot {
    position: absolute;
    right: -10px;
    top: 6px;
    width: 5px;
    height: 6px;
    background: #e00000;
  }

  .l2 {
    font-family: "Liberation Serif", serif;
    letter-spacing: 0.5px;
  }

  .top-center {
    gap: 24px;
    font-size: 19px;
    color: #f02020;
  }

  .top-right {
    gap: 21px;
  }

  .clock {
    gap: 10px;
    height: 34px;
    margin-left: -3px;
    padding: 0 3px 0 5px;
    border-left: 1px solid #b0b0b0;
    border-right: 1px solid #b0b0b0;
  }

  .time {
    font-size: 16px;
    letter-spacing: 0.3px;
  }

  .win {
    gap: 21px;
    margin-left: 3px;
  }

  .middle {
    flex: 1;
    display: flex;
    min-height: 0;
  }

  .left {
    width: 1786px;
    flex: none;
  }

  .toolbar {
    height: 32px;
    display: flex;
    align-items: center;
    border-bottom: 2px solid #a00000;
    box-sizing: content-box;
  }

  .tb-icon {
    width: 34px;
    height: 32px;
    display: flex;
    align-items: center;
    justify-content: center;
    border-right: 1px solid #a00000;
    box-sizing: border-box;
  }

  .periods {
    display: flex;
    gap: 13.5px;
    margin-left: 8px;
  }

  .active {
    color: #40f0f0;
  }

  .btns {
    display: grid;
    grid-template-columns: repeat(8, 52.6px);
    margin-left: auto;
    height: 32px;
    border-right: 1px solid #a00000;
  }

  .btns span {
    border-left: 1px solid #a00000;
    text-align: center;
    line-height: 31px;
  }

  .chart {
    position: relative;
  }

  .chart svg {
    display: block;
  }

  .main-chart {
    height: 713px;
    border-bottom: 2px solid #8b0000;
  }

  .ind-chart {
    height: 499px;
    border-bottom: 2px solid #8b0000;
  }

  .legend {
    position: absolute;
    left: 3px;
    top: 1px;
    height: 24px;
    display: flex;
    align-items: center;
    white-space: nowrap;
  }

  .legend.ind {
    top: 0;
  }

  .chev {
    display: flex;
    margin: 0 6px 0 7px;
  }

  .chev.first {
    margin: 0 5px 0 0;
  }

  .first-lg {
    margin-left: 5px;
  }

  .lg {
    margin-left: 9px;
  }

  .legend .arr {
    margin-left: 5px;
  }

  .narrow {
    margin-left: 12px;
  }

  .wide {
    margin-left: 18px;
  }

  .wider {
    margin-left: 24px;
  }

  .widest {
    margin-left: 26px;
  }

  .white { color: #e8e8e8; }
  .gray { color: #c0c0c0; }
  .yellow { color: #f0f000; }
  .magenta { color: #f000f0; }
  .lime { color: #00e000; }
  .dred { color: #d80000; }
  .red { color: #ff3232; }
  .green { color: #00e600; }
  .cyan { color: #40f0f0; }
  .olive { color: #c0c000; }

  .edge {
    stroke: #444;
    stroke-width: 1;
  }

  .dots {
    stroke: #a00000;
    stroke-width: 1.5;
    stroke-dasharray: 2 4;
  }

  .wick-r, .wick-c {
    stroke-width: 2;
    shape-rendering: crispEdges;
  }

  .wick-r { stroke: #ff3232; }
  .wick-c { stroke: #54fcfc; }

  .body-r {
    fill: #000;
    stroke: #ff3232;
    stroke-width: 2;
    shape-rendering: crispEdges;
  }

  .body-c {
    fill: #54fcfc;
    shape-rendering: crispEdges;
  }

  .ma5, .ma10, .ma20, .ma60 {
    fill: none;
  }

  .ma5 { stroke: #e4e4e4; stroke-width: 1.2; }
  .ma10 { stroke: #e0e000; stroke-width: 1.3; }
  .ma20 { stroke: #e800e8; stroke-width: 1.6; }
  .ma60 { stroke: #00e000; stroke-width: 1.8; }

  .blank {
    fill: #000;
    opacity: 0.975;
  }

  .faint {
    fill: #484848;
    font-size: 16px;
  }

  .high {
    fill: #a8a8a8;
    font-size: 18px;
  }

  .mark {
    font-size: 16px;
    text-anchor: middle;
  }

  .axis {
    stroke: #a00000;
    stroke-width: 2;
  }

  .axis-thin {
    stroke: #a00000;
    stroke-width: 1.5;
  }

  .ax {
    fill: #c80000;
    font-size: 18px;
    text-anchor: end;
  }

  .cur {
    fill: #9ac8ff;
    font-size: 17px;
  }

  .limit-red {
    stroke: #c00000;
    stroke-width: 2.5;
  }

  .limit-gray {
    stroke: #c8c8c8;
    stroke-width: 2.5;
  }

  .base {
    stroke: #d8d800;
    stroke-width: 2;
  }

  .spike {
    fill: none;
    stroke: #e0e000;
    stroke-width: 1.5;
  }

  .chase {
    fill: #e0e0e0;
    font-size: 18px;
  }

  .dip {
    fill: none;
    stroke: #e8e8e8;
    stroke-width: 1.5;
  }

  .seg-w, .seg-r, .seg-g {
    fill: none;
    stroke-linejoin: round;
  }

  .seg-w { stroke: #fff; stroke-width: 2.2; }
  .seg-r { stroke: #d80000; stroke-width: 1.7; }
  .seg-g { stroke: #00c800; stroke-width: 1.7; }

  .warn {
    fill: #f0f000;
    font-size: 18px;
  }

  .dates {
    height: 21px;
    border-bottom: 2px solid #a00000;
  }

  .dates svg {
    display: block;
  }

  .dt {
    fill: #e02020;
    font-size: 18px;
  }

  .dt-sel {
    fill: #c0c8ff;
    font-size: 18px;
  }

  .tabs {
    height: 24px;
    padding-left: 3px;
    display: grid;
    border-bottom: 2px solid #a00000;
    white-space: nowrap;
  }

  .row1 {
    grid-template-columns: 42px 48px 61px 88px 44px 84px 85px 83px 46px 85px 94px 96px 48px 47px;
  }

  .row2 {
    grid-template-columns: 58px 83px 84px 86px 83px 84px 138px;
  }

  .tabs span {
    text-align: center;
    line-height: 25px;
    border-right: 1px solid #a00000;
    overflow: hidden;
  }

  .row2 span {
    line-height: 27px;
  }

  .tabs span:first-child {
    border-left: 1px solid #a00000;
  }

  .panel {
    width: 336px;
    flex: none;
    box-sizing: border-box;
    border-left: 2px solid #a00000;
    padding-left: 3px;
    overflow: hidden;
    position: relative;
  }

  .name {
    height: 44px;
    display: flex;
    align-items: center;
    padding-left: 53px;
  }

  .cn {
    font-size: 28px;
    color: #20e8f0;
  }

  .code {
    margin-left: 8px;
    margin-top: 4px;
    font-size: 18px;
    font-weight: bold;
    letter-spacing: 1px;
    color: #b8b8b8;
  }

  .r {
    margin-left: 9px;
    margin-top: -18px;
    font-size: 14px;
    color: #ff3232;
    font-weight: bold;
  }

  .price {
    height: 41px;
    display: grid;
    grid-template-columns: 120px 123px 84px;
    align-items: center;
    font-size: 29px;
    font-weight: bold;
    color: #ff3232;
    white-space: nowrap;
  }

  .sec {
    margin-left: -3px;
    padding-left: 3px;
    border-top: 2px solid #a00000;
  }

  .split {
    margin-left: -3px;
    height: 2px;
    background: linear-gradient(90deg, #a06a20 0 52px, #2a6aa0 52px);
  }

  .pad {
    padding-bottom: 6px;
  }

  .pad2 {
    padding-bottom: 4px;
  }

  .lbl {
    font-size: 22px;
    color: #b8b8b8;
    white-space: nowrap;
  }

  .tight {
    letter-spacing: -1.5px;
  }

  b {
    font-size: 20px;
    text-align: right;
    white-space: nowrap;
  }

  .unit {
    font-style: normal;
    font-weight: normal;
    font-size: 22px;
  }

  .yen {
    font-style: normal;
    margin-left: 6px;
    font-size: 18px;
  }

  .d-row {
    height: 27.2px;
    line-height: 27.2px;
    display: grid;
    grid-template-columns: 70px 90px 102px 66px;
    align-items: center;
  }

  .vol {
    text-align: right;
    color: #c0c000;
    font-size: 21px;
    white-space: nowrap;
  }

  .delta {
    text-align: right;
    font-size: 18px;
  }

  .delta.green { color: #00c000; }
  .delta.red { color: #e02020; }

  .q-row {
    height: 28.6px;
    line-height: 28.6px;
    display: grid;
    grid-template-columns: 70px 90px 78px 90px;
    align-items: center;
  }

  .l2nd {
    padding-left: 8px;
  }

  .f-row {
    height: 28.6px;
    line-height: 28.6px;
    display: grid;
    grid-template-columns: 138px 45px 83px 63px;
    align-items: center;
  }

  .bar-cell {
    display: flex;
    align-items: center;
  }

  .bar {
    display: block;
    height: 10px;
    background: #ff3232;
  }

  .t-row {
    height: 27.1px;
    line-height: 27.1px;
    display: grid;
    grid-template-columns: 60px 95px 94px 30px 48px;
    align-items: center;
  }

  .t-row > b:first-child {
    text-align: left;
  }

  .side {
    flex: 1;
    display: flex;
    flex-direction: column;
    background: #f0f0f0;
    border-left: 2px solid #c4c4c4;
    box-sizing: border-box;
    overflow: hidden;
  }

  .ic {
    height: 34.4px;
    flex: none;
    display: flex;
    align-items: center;
    justify-content: center;
    color: #24479a;
  }

  .side svg {
    display: block;
  }

  .side hr {
    width: 30px;
    margin: 6px auto;
    height: 2px;
    border: 0;
    background: #b8b8b8;
    flex: none;
  }

  .ar {
    fill: #f6faff;
    stroke: #6aa4f0;
    stroke-width: 2;
  }

  .bx {
    fill: #fafcff;
    stroke: #5f9bf0;
    stroke-width: 2;
  }

  .ic-t {
    fill: #2050b0;
    font-size: 12px;
    text-anchor: middle;
    font-weight: bold;
  }

  .ic-o {
    fill: #f08030;
    font-size: 15px;
    font-weight: bold;
    text-anchor: middle;
  }

  .ic-f {
    fill: #205090;
    font-size: 12px;
    font-style: italic;
    text-anchor: middle;
  }

  .ic-s {
    fill: #c03030;
    font-size: 24px;
    font-weight: bold;
    text-anchor: middle;
  }

  .rsi {
    font-weight: bold;
    font-size: 17px;
    color: #3a50b0;
  }

  .txt {
    font-size: 17px;
  }

  .sel {
    background: #fafafa;
    border-left: 2px solid #a0a0a0;
    border-top: 2px solid #a0a0a0;
    box-sizing: border-box;
  }

  .status {
    height: 37px;
    flex: none;
    background: #f0f0f0;
    color: #111;
    display: grid;
    grid-template-columns: 24px 55px 102px 75px 86px 93px 55px 102px 75px 85px 99px 52px 102px 75px;
    align-items: center;
    white-space: nowrap;
  }

  .status svg {
    margin-left: 1px;
  }

  .s-lbl {
    font-size: 24px;
  }

  .s-red {
    font-size: 21px;
    color: #f00000;
    text-align: left;
  }

  .s-vol {
    font-size: 24px;
  }

  .s-vol b {
    font-size: 21px;
  }

  .stamp {
    position: absolute;
    left: 1080px;
    top: 1286px;
    width: 1080px;
    height: 109px;
    background: rgba(128, 171, 217, 0.965);
    display: flex;
    align-items: center;
    white-space: nowrap;
  }

  .stamp-cn {
    margin-left: 23px;
    width: 375px;
    font-size: 75px;
    line-height: 1;
    font-weight: 900;
    color: #1a0a8c;
    font-family: "Noto Sans CJK SC", sans-serif;
  }

  .stamp-logo {
    margin-left: 32px;
    flex: none;
  }

  .stamp-mini {
    fill: #fff;
    font-size: 9px;
  }

  .stamp-en {
    margin-left: 40px;
    font-family: "DejaVu Serif", serif;
    font-weight: bold;
    font-size: 69.5px;
    line-height: 1;
    color: #fff;
  }
</style>
